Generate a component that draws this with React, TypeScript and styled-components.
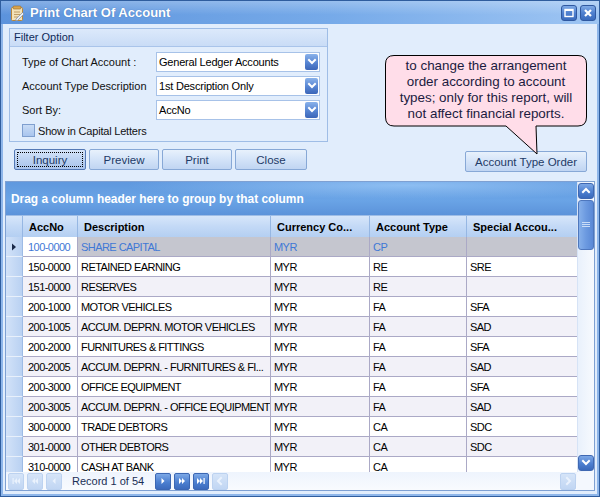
import React from "react";
import styled, { createGlobalStyle, css } from "styled-components";

const GlobalStyle = createGlobalStyle`
  html, body { margin: 0; padding: 0; background: #fff; }
  body { font-family: "Liberation Sans", Arial, sans-serif; font-size: 11px; color: #000; }
  * { box-sizing: border-box; }
`;

const Window = styled.div`
  width: 600px;
  height: 497px;
  display: flex;
  flex-direction: column;
  border: 1px solid #2f5d9e;
  background: #3e72bd;
  overflow: hidden;
`;

const TitleBar = styled.div`
  height: 23px;
  flex: none;
  display: flex;
  align-items: center;
  padding: 0 3px 0 9px;
  background: linear-gradient(to bottom, rgba(255,255,255,0.25) 0, rgba(255,255,255,0) 60%),
    linear-gradient(to right, #5c93dc 0%, #76aae9 55%, #9ec5f3 100%);
`;

const TitleText = styled.div`
  flex: 1;
  margin-left: 5px;
  font-weight: bold;
  font-size: 13px;
  color: #fff;
  text-shadow: 0 0 1px #3b6ab0;
`;

const TitleButton = styled.div`
  width: 16px;
  height: 16px;
  margin-left: 3px;
  border-radius: 3px;
  border: 1px solid #2f58a0;
  background: linear-gradient(to bottom, #7faae6 0%, #4f80cf 50%, #3a6bbd 100%);
  display: flex;
  align-items: center;
  justify-content: center;
`;

const Body = styled.div`
  flex: 1;
  min-height: 0;
  display: flex;
  flex-direction: column;
  border: 2px solid #8eb6ea;
  border-top: none;
  background: #e1edfc;
  padding: 4px 2px 3px 2px;
`;

const TopSection = styled.div`
  display: flex;
  padding: 0 8px 0 4px;
  height: 142px;
  flex: none;
`;

const LeftColumn = styled.div`
  display: flex;
  flex-direction: column;
  width: 319px;
`;

const RightColumn = styled.div`
  flex: 1;
  display: flex;
  flex-direction: column;
  align-items: flex-end;
`;

const GroupBox = styled.div`
  height: 114px;
  flex: none;
  border: 1px solid #9fbde6;
  display: flex;
  flex-direction: column;
`;

const GroupHeader = styled.div`
  height: 18px;
  line-height: 17px;
  padding-left: 4px;
  font-size: 11px;
  color: #0f2a58;
  background: linear-gradient(to bottom, #dce9fb 0%, #c9dcf6 100%);
  border-bottom: 1px solid #a9c4ea;
`;

const GroupContent = styled.div`
  padding: 5px 6px 0 12px;
  display: flex;
  flex-direction: column;
  gap: 4px;
`;

const FieldRow = styled.div`
  display: flex;
  align-items: center;
  height: 20px;
`;

const Label = styled.div`
  width: 134px;
  font-size: 11px;
  color: #111;
  white-space: nowrap;
`;

const Select = styled.div`
  width: 164px;
  height: 20px;
  border: 1px solid #a7c2e8;
  background: #fff;
  display: flex;
  align-items: center;
  padding-left: 2px;
  font-size: 11px;
  letter-spacing: -0.2px;
  color: #000;
`;

const SelectText = styled.span`
  flex: 1;
`;

const DropButton = styled.div`
  width: 13px;
  height: 16px;
  margin-right: 1px;
  border-radius: 2px;
  background: linear-gradient(to bottom, #8ab2ea 0%, #5684d2 55%, #3c66b8 100%);
  display: flex;
  align-items: center;
  justify-content: center;
`;

const CheckRow = styled.label`
  display: flex;
  align-items: center;
  gap: 3px;
  font-size: 11px;
  letter-spacing: -0.2px;
  color: #111;
`;

const CheckBox = styled.span`
  width: 13px;
  height: 13px;
  border: 1px solid #7f9fcf;
  background: linear-gradient(to bottom, #c9dcf5 0%, #a9c5ee 100%);
  display: inline-block;
`;

const ButtonRow = styled.div`
  display: flex;
  gap: 3px;
  margin-top: 7px;
  margin-left: 5px;
`;

const Button = styled.div<{ $focused?: boolean; $w?: number; $mt?: number }>`
  width: ${(p) => p.$w ?? 70}px;
  height: 21px;
  flex: none;
  margin-top: ${(p) => p.$mt ?? 0}px;
  border: 1px solid #87a8d6;
  border-radius: 2px;
  background: linear-gradient(to bottom, #e8f1fc 0%, #d3e3f8 50%, #c0d5f2 100%);
  color: #1e3a66;
  font-size: 11.5px;
  display: flex;
  align-items: center;
  justify-content: center;
  position: relative;
  ${(p) =>
    p.$focused &&
    css`
      border-color: #5378b5;
      background: linear-gradient(to bottom, #d5e4f8 0%, #bcd2f1 50%, #a9c4ec 100%);
      &::after {
        content: "";
        position: absolute;
        inset: 2px;
        border: 1px dotted #000;
      }
    `}
`;

const Callout = styled.div`
  position: relative;
  z-index: 1;
  width: 202px;
  height: 72px;
  flex: none;
  margin-top: 27px;
  padding-top: 3px;
  text-align: center;
  font-size: 13.4px;
  line-height: 16px;
  color: #1b1b40;
`;

const CalloutShape = styled.svg`
  position: absolute;
  left: 0;
  top: 0;
  overflow: visible;
`;

const CalloutText = styled.div`
  position: relative;
  white-space: nowrap;
`;

const Grid = styled.div`
  flex: 1;
  min-height: 0;
  margin-top: 11px;
  border: 1px solid #7ea0d2;
  display: grid;
  grid-template-columns: 1fr 17px;
  grid-template-rows: minmax(0, 1fr) 18px;
  background: #fff;
`;

const Main = styled.div`
  display: flex;
  flex-direction: column;
  min-height: 0;
  overflow: hidden;
`;

const GroupPanel = styled.div`
  height: 33px;
  flex: none;
  display: flex;
  align-items: center;
  padding-left: 5px;
  font-weight: bold;
  font-size: 11.9px;
  color: #fff;
  background: radial-gradient(ellipse 70% 60% at 70% 10%, rgba(160, 205, 250, 0.7), rgba(160, 205, 250, 0) 70%),
    linear-gradient(to bottom, #5f98de 0%, #6aa4e6 55%, #5c93da 100%);
`;

const cols = "17px 55px 193px 99px 97px 111px";

const HeaderRow = styled.div`
  height: 22px;
  flex: none;
  display: grid;
  grid-template-columns: ${cols};
  background: linear-gradient(to bottom, #d7e6fa 0%, #c3d9f6 50%, #b4cff2 100%);
  border-top: 1px solid #9ebde6;
`;

const HeaderCell = styled.div`
  display: flex;
  align-items: center;
  padding-left: 6px;
  font-weight: bold;
  font-size: 11px;
  color: #000;
  border-right: 1px solid #96b7e3;
  white-space: nowrap;
  overflow: hidden;
`;

const Rows = styled.div`
  flex: 1;
  overflow: hidden;
  min-height: 0;
`;

const DataRow = styled.div<{ $alt?: boolean; $selected?: boolean }>`
  height: 20px;
  display: grid;
  grid-template-columns: ${cols};
  background: ${(p) => (p.$selected ? "#c5c6cf" : p.$alt ? "#f2f1f8" : "#ffffff")};
  color: ${(p) => (p.$selected ? "#3f78d6" : "#000")};
`;

const Indicator = styled.div`
  display: flex;
  align-items: center;
  justify-content: center;
  background: linear-gradient(to right, #d2e2f8 0%, #b9d1f2 100%);
  border-bottom: 1px solid #e8f0fb;
  border-right: 1px solid #9dbbe5;
`;

const Cell = styled.div<{ $pad?: number }>`
  display: flex;
  align-items: center;
  padding-left: ${(p) => p.$pad ?? 3}px;
  font-size: 11px;
  letter-spacing: -0.55px;
  white-space: nowrap;
  overflow: hidden;
  border-right: 1px solid #aba9c6;
  border-bottom: 1px solid #aba9c6;
`;

const SelCell = styled(Cell)`
  background: #fff;
`;

const ScrollCol = styled.div`
  display: flex;
  flex-direction: column;
  align-items: center;
  padding: 1px 0;
  background: linear-gradient(to right, #e9f1fc 0%, #f7fafe 100%);
  border-left: 1px solid #d6e3f6;
  min-height: 0;
`;

const ScrollBtn = styled.div`
  width: 16px;
  height: 16px;
  flex: none;
  border-radius: 3px;
  border: 1px solid #3f68b2;
  background: linear-gradient(to bottom, #7da8e6 0%, #4d7fd0 55%, #3a69bb 100%);
  display: flex;
  align-items: center;
  justify-content: center;
`;

const Thumb = styled.div`
  width: 16px;
  height: 50px;
  flex: none;
  margin-top: 1px;
  border-radius: 3px;
  border: 1px solid #4e77bd;
  background: linear-gradient(to right, #86b0ea 0%, #6c9ae0 50%, #5a89d6 100%);
  display: flex;
  align-items: center;
  justify-content: center;
`;

const ScrollSpacer = styled.div`
  flex: 1;
`;

const NavBar = styled.div`
  display: flex;
  align-items: center;
  padding: 0 1px 0 2px;
  gap: 3px;
  background: linear-gradient(to bottom, #eef4fd 0%, #f9fbfe 100%);
`;

const Corner = styled.div`
  background: #f4f8fe;
`;

const NavBtn = styled.div<{ $active?: boolean }>`
  width: 16px;
  height: 17px;
  border-radius: 2px;
  display: flex;
  align-items: center;
  justify-content: center;
  ${(p) =>
    p.$active
      ? css`
          border: 1px solid #3c67b3;
          background: linear-gradient(to bottom, #7ca8e6 0%, #4c7fd0 55%, #3c6bbd 100%);
        `
      : css`
          border: 1px solid #bcd2f0;
          background: linear-gradient(to bottom, #d5e4f8 0%, #c1d6f3 100%);
        `}
`;

const RecordText = styled.div`
  padding: 0 8px 0 7px;
  font-size: 11px;
  color: #1b2f55;
`;

const NavFill = styled.div`
  flex: 1;
`;

const Chevron = ({ dir, color = "#fff" }: { dir: "up" | "down" | "left" | "right"; color?: string }) => {
  const paths: Record<string, string> = {
    down: "M2 3 L5 6 L8 3",
    up: "M2 6 L5 3 L8 6",
    left: "M6 2 L3 5 L6 8",
    right: "M4 2 L7 5 L4 8",
  };
  return (
    <svg width="10" height="10" viewBox="0 0 10 10">
      <path d={paths[dir]} fill="none" stroke={color} strokeWidth="2" strokeLinecap="square" />
    </svg>
  );
};

const NavGlyph = ({ kind, color }: { kind: string; color: string }) => {
  const tri = (x: number, left: boolean) =>
    left ? `M${x + 3} 2 L${x} 5 L${x + 3} 8 Z` : `M${x} 2 L${x + 3} 5 L${x} 8 Z`;
  let d = "";
  let bar: React.ReactNode = null;
  if (kind === "first") {
    d = tri(3, true) + " " + tri(6, true);
    bar = <rect x="1.5" y="2" width="1.2" height="6" fill={color} />;
  } else if (kind === "prevpage") d = tri(2, true) + " " + tri(5, true);
  else if (kind === "prev") d = tri(3.5, true);
  else if (kind === "next") d = tri(3.5, false);
  else if (kind === "nextpage") d = tri(2, false) + " " + tri(5, false);
  else if (kind === "last") {
    d = tri(1, false) + " " + tri(4, false);
    bar = <rect x="7.5" y="2" width="1.2" height="6" fill={color} />;
  }
  return (
    <svg width="10" height="10" viewBox="0 0 10 10">
      <path d={d} fill={color} />
      {bar}
    </svg>
  );
};

const rows: [string, string, string, string, string][] = [
  ["100-0000", "SHARE CAPITAL", "MYR", "CP", ""],
  ["150-0000", "RETAINED EARNING", "MYR", "RE", "SRE"],
  ["151-0000", "RESERVES", "MYR", "RE", ""],
  ["200-1000", "MOTOR VEHICLES", "MYR", "FA", "SFA"],
  ["200-1005", "ACCUM. DEPRN. MOTOR VEHICLES", "MYR", "FA", "SAD"],
  ["200-2000", "FURNITURES & FITTINGS", "MYR", "FA", "SFA"],
  ["200-2005", "ACCUM. DEPRN. - FURNITURES & FI...", "MYR", "FA", "SAD"],
  ["200-3000", "OFFICE EQUIPMENT", "MYR", "FA", "SFA"],
  ["200-3005", "ACCUM. DEPRN. - OFFICE EQUIPMENT", "MYR", "FA", "SAD"],
  ["300-0000", "TRADE DEBTORS", "MYR", "CA", "SDC"],
  ["301-0000", "OTHER DEBTORS", "MYR", "CA", "SDC"],
  ["310-0000", "CASH AT BANK", "MYR", "CA", ""],
];

const filters: [string, string][] = [
  ["Type of Chart Account :", "General Ledger Accounts"],
  ["Account Type Description", "1st Description Only"],
  ["Sort By:", "AccNo"],
];

const calloutLines = [
  "to change the arrangement",
  "order according to account",
  "types; only for this report, will",
  "not affect financial reports.",
];

export default function App() {
  return (
    <>
      <GlobalStyle />
      <Window>
        <TitleBar>
          <svg width="15" height="16" viewBox="0 0 15 16">
            <rect x="1.5" y="2.5" width="11" height="13" rx="1" fill="#f3e3b8" stroke="#b8863a" />
            <rect x="3" y="1" width="8" height="3" rx="1" fill="#d9a54e" stroke="#9a6a28" strokeWidth="0.6" />
            <path d="M4 7 H10 M4 9.5 H10 M4 12 H8" stroke="#b08a50" strokeWidth="0.8" />
            <path d="M6 14 L12.5 7.5 L14 9 L7.5 15.5 L5.5 15.8 Z" fill="#e9eef6" stroke="#6f7d94" strokeWidth="0.6" />
          </svg>
          <TitleText>Print Chart Of Account</TitleText>
          <TitleButton>
            <svg width="10" height="10" viewBox="0 0 10 10">
              <rect x="1" y="1.5" width="8" height="7" fill="none" stroke="#fff" strokeWidth="1.4" />
              <rect x="1" y="1" width="8" height="2" fill="#fff" />
            </svg>
          </TitleButton>
          <TitleButton>
            <svg width="10" height="10" viewBox="0 0 10 10">
              <path d="M2 2 L8 8 M8 2 L2 8" stroke="#fff" strokeWidth="2.2" />
            </svg>
          </TitleButton>
        </TitleBar>
        <Body>
          <TopSection>
            <LeftColumn>
              <GroupBox>
                <GroupHeader>Filter Option</GroupHeader>
                <GroupContent>
                  {filters.map(([label, value]) => (
                    <FieldRow key={label}>
                      <Label>{label}</Label>
                      <Select>
                        <SelectText>{value}</SelectText>
                        <DropButton>
                          <Chevron dir="down" />
                        </DropButton>
                      </Select>
                    </FieldRow>
                  ))}
                  <CheckRow>
                    <CheckBox />
                    Show in Capital Letters
                  </CheckRow>
                </GroupContent>
              </GroupBox>
              <ButtonRow>
                <Button $focused $w={72}>Inquiry</Button>
                <Button $w={70}>Preview</Button>
                <Button $w={70}>Print</Button>
                <Button $w={72}>Close</Button>
              </ButtonRow>
            </LeftColumn>
            <RightColumn>
              <Callout>
                <CalloutShape width="202" height="100" viewBox="0 0 202 100">
                  <path
                    d="M9 0.5 H193 Q201.5 0.5 201.5 9 V62 Q201.5 71 193 71 H151 L152 99 L121 71 H9 Q0.5 71 0.5 62 V9 Q0.5 0.5 9 0.5 Z"
                    fill="#ffdde9"
                    stroke="#000"
                    strokeWidth="1"
                  />
                </CalloutShape>
                {calloutLines.map((l) => (
                  <CalloutText key={l}>{l}</CalloutText>
                ))}
              </Callout>
              <Button $w={122} $mt={24}>
                Account Type Order
              </Button>
            </RightColumn>
          </TopSection>
          <Grid>
            <Main>
              <GroupPanel>Drag a column header here to group by that column</GroupPanel>
              <HeaderRow>
                <HeaderCell />
                <HeaderCell>AccNo</HeaderCell>
                <HeaderCell>Description</HeaderCell>
                <HeaderCell>Currency Co...</HeaderCell>
                <HeaderCell>Account Type</HeaderCell>
                <HeaderCell>Special Accou...</HeaderCell>
              </HeaderRow>
              <Rows>
                {rows.map((r, i) => {
                  const selected = i === 0;
                  return (
                    <DataRow key={r[0]} $selected={selected} $alt={i % 2 === 0}>
                      <Indicator>
                        {selected && (
                          <svg width="6" height="8" viewBox="0 0 6 8">
                            <path d="M1 0.5 L5 4 L1 7.5 Z" fill="#1a2a4a" />
                          </svg>
                        )}
                      </Indicator>
                      {selected ? <SelCell $pad={5}>{r[0]}</SelCell> : <Cell $pad={5}>{r[0]}</Cell>}
                      <Cell>{r[1]}</Cell>
                      <Cell>{r[2]}</Cell>
                      <Cell>{r[3]}</Cell>
                      <Cell>{r[4]}</Cell>
                    </DataRow>
                  );
                })}
              </Rows>
            </Main>
            <ScrollCol>
              <ScrollBtn>
                <Chevron dir="up" />
              </ScrollBtn>
              <Thumb>
                <svg width="8" height="6" viewBox="0 0 8 6">
                  <path d="M0 0.5 H8 M0 2.5 H8 M0 4.5 H8" stroke="#c9dcf7" strokeWidth="1" />
                </svg>
              </Thumb>
              <ScrollSpacer />
              <ScrollBtn>
                <Chevron dir="down" />
              </ScrollBtn>
            </ScrollCol>
            <NavBar>
              <NavBtn>
                <NavGlyph kind="first" color="#eaf2fd" />
              </NavBtn>
              <NavBtn>
                <NavGlyph kind="prevpage" color="#eaf2fd" />
              </NavBtn>
              <NavBtn>
                <NavGlyph kind="prev" color="#eaf2fd" />
              </NavBtn>
              <RecordText>Record 1 of 54</RecordText>
              <NavBtn $active>
                <NavGlyph kind="next" color="#fff" />
              </NavBtn>
              <NavBtn $active>
                <NavGlyph kind="nextpage" color="#fff" />
              </NavBtn>
              <NavBtn $active>
                <NavGlyph kind="last" color="#fff" />
              </NavBtn>
              <NavBtn>
                <Chevron dir="left" color="#eaf2fd" />
              </NavBtn>
              <NavFill />
              <NavBtn>
                <Chevron dir="right" color="#eaf2fd" />
              </NavBtn>
            </NavBar>
            <Corner />
          </Grid>
        </Body>
      </Window>
    </>
  );
}
